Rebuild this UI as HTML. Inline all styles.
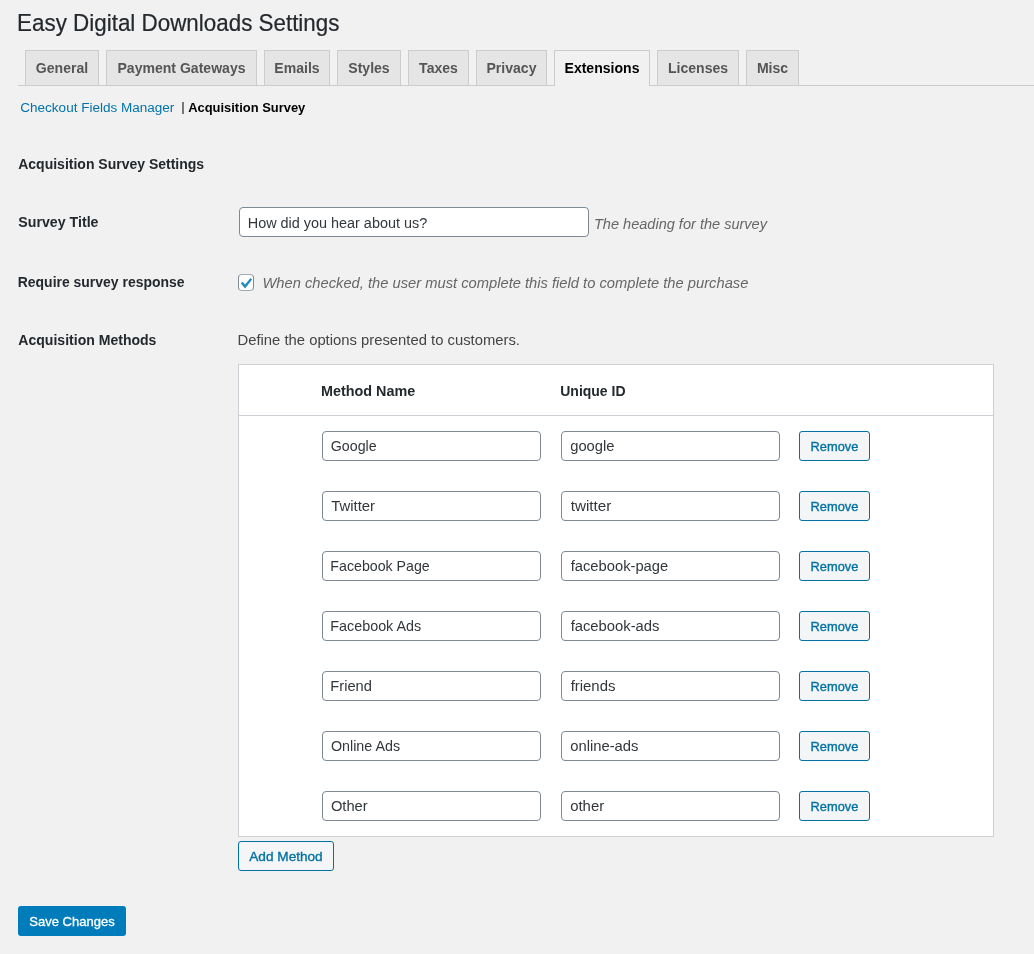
<!DOCTYPE html>
<html><head><meta charset="utf-8"><title>Easy Digital Downloads Settings</title><style>
html,body{margin:0;padding:0;}
body{width:1034px;height:954px;background:#f1f1f1;position:relative;overflow:hidden;font-family:"Liberation Sans", sans-serif;}
.abs{position:absolute;box-sizing:content-box;}
.t{position:absolute;white-space:nowrap;line-height:20px;transform:translateZ(0);}
.tab{position:absolute;border:1px solid #ccc;border-bottom:none;}
.inp{position:absolute;background:#fff;border:1px solid #7e8993;border-radius:4px;}
.cb{position:absolute;background:#fff;border:1px solid #7e8993;border-radius:4px;}
.btn{position:absolute;background:#f3f5f6;border:1px solid #0071a1;border-radius:3px;}
</style></head><body>
<div class="abs" style="left:18px;top:85px;width:1016px;height:1px;background:#ccc"></div>
<div class="tab" style="left:25px;top:50px;width:72px;height:34px;background:#e5e5e5"></div>
<div class="tab" style="left:106px;top:50px;width:149px;height:34px;background:#e5e5e5"></div>
<div class="tab" style="left:264px;top:50px;width:64px;height:34px;background:#e5e5e5"></div>
<div class="tab" style="left:337px;top:50px;width:62px;height:34px;background:#e5e5e5"></div>
<div class="tab" style="left:408px;top:50px;width:59px;height:34px;background:#e5e5e5"></div>
<div class="tab" style="left:476px;top:50px;width:69px;height:34px;background:#e5e5e5"></div>
<div class="tab" style="left:554px;top:50px;width:94px;height:35px;background:#f1f1f1"></div>
<div class="tab" style="left:657px;top:50px;width:80px;height:34px;background:#e5e5e5"></div>
<div class="tab" style="left:746px;top:50px;width:51px;height:34px;background:#e5e5e5"></div>
<div class="abs" style="left:182px;top:102px;width:2px;height:12px;background:#777"></div>
<div class="inp" style="left:239px;top:207px;width:348px;height:28px"></div>
<div class="cb" style="left:238px;top:274px;width:14px;height:14.5px;border-top-color:#a3aab1;border-bottom-color:#a3aab1"></div>
<svg class="abs" style="left:238px;top:274px" width="16" height="16" viewBox="0 0 16 16"><path d="M2.9 9.4 L4.4 7.8 L7.1 10.6 L12.5 3.9 L14.1 5.5 L7.1 14.4 Z" fill="#1e8cbe"/></svg>
<div class="abs" style="left:238px;top:364px;width:754px;height:471px;background:#fff;border:1px solid #ccd0d4"></div>
<div class="abs" style="left:239px;top:415px;width:754px;height:1px;background:#ccd0d4"></div>
<div class="inp" style="left:322px;top:431px;width:217px;height:28px"></div>
<div class="inp" style="left:561px;top:431px;width:217px;height:28px"></div>
<div class="btn" style="left:799px;top:431px;width:69px;height:28px"></div>
<div class="inp" style="left:322px;top:491px;width:217px;height:28px"></div>
<div class="inp" style="left:561px;top:491px;width:217px;height:28px"></div>
<div class="btn" style="left:799px;top:491px;width:69px;height:28px"></div>
<div class="inp" style="left:322px;top:551px;width:217px;height:28px"></div>
<div class="inp" style="left:561px;top:551px;width:217px;height:28px"></div>
<div class="btn" style="left:799px;top:551px;width:69px;height:28px"></div>
<div class="inp" style="left:322px;top:611px;width:217px;height:28px"></div>
<div class="inp" style="left:561px;top:611px;width:217px;height:28px"></div>
<div class="btn" style="left:799px;top:611px;width:69px;height:28px"></div>
<div class="inp" style="left:322px;top:671px;width:217px;height:28px"></div>
<div class="inp" style="left:561px;top:671px;width:217px;height:28px"></div>
<div class="btn" style="left:799px;top:671px;width:69px;height:28px"></div>
<div class="inp" style="left:322px;top:731px;width:217px;height:28px"></div>
<div class="inp" style="left:561px;top:731px;width:217px;height:28px"></div>
<div class="btn" style="left:799px;top:731px;width:69px;height:28px"></div>
<div class="inp" style="left:322px;top:791px;width:217px;height:28px"></div>
<div class="inp" style="left:561px;top:791px;width:217px;height:28px"></div>
<div class="btn" style="left:799px;top:791px;width:69px;height:28px"></div>
<div class="btn" style="left:238px;top:841px;width:94px;height:28px"></div>
<div class="abs" style="left:18px;top:906px;width:108px;height:30px;background:#007cba;border-radius:3px"></div>
<div class="t" style="left:17.11px;top:14.04px;font-size:22.40px;font-weight:400;font-style:normal;color:#23282d;-webkit-text-stroke:0.2px #23282d;transform:translateZ(0) scaleY(1.085);transform-origin:0 17.76px;">Easy Digital Downloads Settings</div>
<div class="t" style="left:25px;width:74px;text-align:center;top:58.03px;font-size:14.05px;font-weight:700;font-style:normal;color:#555;">General</div>
<div class="t" style="left:106px;width:151px;text-align:center;top:58.03px;font-size:14.05px;font-weight:700;font-style:normal;color:#555;">Payment Gateways</div>
<div class="t" style="left:264px;width:66px;text-align:center;top:58.03px;font-size:14.05px;font-weight:700;font-style:normal;color:#555;">Emails</div>
<div class="t" style="left:337px;width:64px;text-align:center;top:58.03px;font-size:14.05px;font-weight:700;font-style:normal;color:#555;">Styles</div>
<div class="t" style="left:408px;width:61px;text-align:center;top:58.03px;font-size:14.05px;font-weight:700;font-style:normal;color:#555;">Taxes</div>
<div class="t" style="left:476px;width:71px;text-align:center;top:58.03px;font-size:14.05px;font-weight:700;font-style:normal;color:#555;">Privacy</div>
<div class="t" style="left:554px;width:96px;text-align:center;top:58.03px;font-size:14.05px;font-weight:700;font-style:normal;color:#000;">Extensions</div>
<div class="t" style="left:657px;width:82px;text-align:center;top:58.03px;font-size:14.05px;font-weight:700;font-style:normal;color:#555;">Licenses</div>
<div class="t" style="left:746px;width:53px;text-align:center;top:58.03px;font-size:14.05px;font-weight:700;font-style:normal;color:#555;">Misc</div>
<div class="t" style="left:20.32px;top:97.81px;font-size:13.53px;font-weight:400;font-style:normal;color:#0073aa;">Checkout Fields Manager</div>
<div class="t" style="left:188.14px;top:97.52px;font-size:12.94px;font-weight:700;font-style:normal;color:#000;">Acquisition Survey</div>
<div class="t" style="left:18.22px;top:154.15px;font-size:14.00px;font-weight:700;font-style:normal;color:#23282d;">Acquisition Survey Settings</div>
<div class="t" style="left:18.32px;top:212.28px;font-size:14.20px;font-weight:700;font-style:normal;color:#23282d;">Survey Title</div>
<div class="t" style="left:17.76px;top:272.06px;font-size:13.96px;font-weight:700;font-style:normal;color:#23282d;">Require survey response</div>
<div class="t" style="left:18.32px;top:329.93px;font-size:14.05px;font-weight:700;font-style:normal;color:#23282d;">Acquisition Methods</div>
<div class="t" style="left:247.75px;top:213.00px;font-size:14.42px;font-weight:400;font-style:normal;color:#32373c;">How did you hear about us?</div>
<div class="t" style="left:593.94px;top:213.66px;font-size:14.55px;font-weight:400;font-style:italic;color:#666;">The heading for the survey</div>
<div class="t" style="left:262.42px;top:272.70px;font-size:14.72px;font-weight:400;font-style:italic;color:#666;">When checked, the user must complete this field to complete the purchase</div>
<div class="t" style="left:237.51px;top:329.57px;font-size:14.82px;font-weight:400;font-style:normal;color:#444;">Define the options presented to customers.</div>
<div class="t" style="left:321.04px;top:381.01px;font-size:14.39px;font-weight:700;font-style:normal;color:#23282d;">Method Name</div>
<div class="t" style="left:560.26px;top:381.05px;font-size:13.99px;font-weight:700;font-style:normal;color:#23282d;">Unique ID</div>
<div class="t" style="left:330.79px;top:435.96px;font-size:14.24px;font-weight:400;font-style:normal;color:#32373c;">Google</div>
<div class="t" style="left:570.21px;top:435.79px;font-size:14.76px;font-weight:400;font-style:normal;color:#32373c;">google</div>
<div class="t" style="left:799px;width:71px;text-align:center;top:437.05px;font-size:12.83px;font-weight:400;font-style:normal;color:#0071a1;-webkit-text-stroke:0.35px #0071a1;">Remove</div>
<div class="t" style="left:331.20px;top:495.74px;font-size:14.90px;font-weight:400;font-style:normal;color:#32373c;">Twitter</div>
<div class="t" style="left:570.65px;top:495.61px;font-size:15.28px;font-weight:400;font-style:normal;color:#32373c;">twitter</div>
<div class="t" style="left:799px;width:71px;text-align:center;top:497.05px;font-size:12.83px;font-weight:400;font-style:normal;color:#0071a1;-webkit-text-stroke:0.35px #0071a1;">Remove</div>
<div class="t" style="left:330.36px;top:555.98px;font-size:14.20px;font-weight:400;font-style:normal;color:#32373c;">Facebook Page</div>
<div class="t" style="left:570.65px;top:555.78px;font-size:14.76px;font-weight:400;font-style:normal;color:#32373c;">facebook-page</div>
<div class="t" style="left:799px;width:71px;text-align:center;top:557.05px;font-size:12.83px;font-weight:400;font-style:normal;color:#0071a1;-webkit-text-stroke:0.35px #0071a1;">Remove</div>
<div class="t" style="left:330.35px;top:615.94px;font-size:14.33px;font-weight:400;font-style:normal;color:#32373c;">Facebook Ads</div>
<div class="t" style="left:570.65px;top:615.78px;font-size:14.79px;font-weight:400;font-style:normal;color:#32373c;">facebook-ads</div>
<div class="t" style="left:799px;width:71px;text-align:center;top:617.05px;font-size:12.83px;font-weight:400;font-style:normal;color:#0071a1;-webkit-text-stroke:0.35px #0071a1;">Remove</div>
<div class="t" style="left:330.33px;top:675.81px;font-size:14.68px;font-weight:400;font-style:normal;color:#32373c;">Friend</div>
<div class="t" style="left:570.65px;top:675.73px;font-size:14.93px;font-weight:400;font-style:normal;color:#32373c;">friends</div>
<div class="t" style="left:799px;width:71px;text-align:center;top:677.05px;font-size:12.83px;font-weight:400;font-style:normal;color:#0071a1;-webkit-text-stroke:0.35px #0071a1;">Remove</div>
<div class="t" style="left:330.93px;top:735.94px;font-size:14.31px;font-weight:400;font-style:normal;color:#32373c;">Online Ads</div>
<div class="t" style="left:570.21px;top:735.77px;font-size:14.81px;font-weight:400;font-style:normal;color:#32373c;">online-ads</div>
<div class="t" style="left:799px;width:71px;text-align:center;top:737.05px;font-size:12.83px;font-weight:400;font-style:normal;color:#0071a1;-webkit-text-stroke:0.35px #0071a1;">Remove</div>
<div class="t" style="left:330.91px;top:795.80px;font-size:14.71px;font-weight:400;font-style:normal;color:#32373c;">Other</div>
<div class="t" style="left:570.20px;top:795.73px;font-size:14.91px;font-weight:400;font-style:normal;color:#32373c;">other</div>
<div class="t" style="left:799px;width:71px;text-align:center;top:797.05px;font-size:12.83px;font-weight:400;font-style:normal;color:#0071a1;-webkit-text-stroke:0.35px #0071a1;">Remove</div>
<div class="t" style="left:238px;width:96px;text-align:center;top:846.88px;font-size:13.62px;font-weight:400;font-style:normal;color:#0071a1;-webkit-text-stroke:0.35px #0071a1;">Add Method</div>
<div class="t" style="left:18px;width:108px;text-align:center;top:911.99px;font-size:13.00px;font-weight:400;font-style:normal;color:#fff;-webkit-text-stroke:0.3px #fff;">Save Changes</div>
</body></html>
